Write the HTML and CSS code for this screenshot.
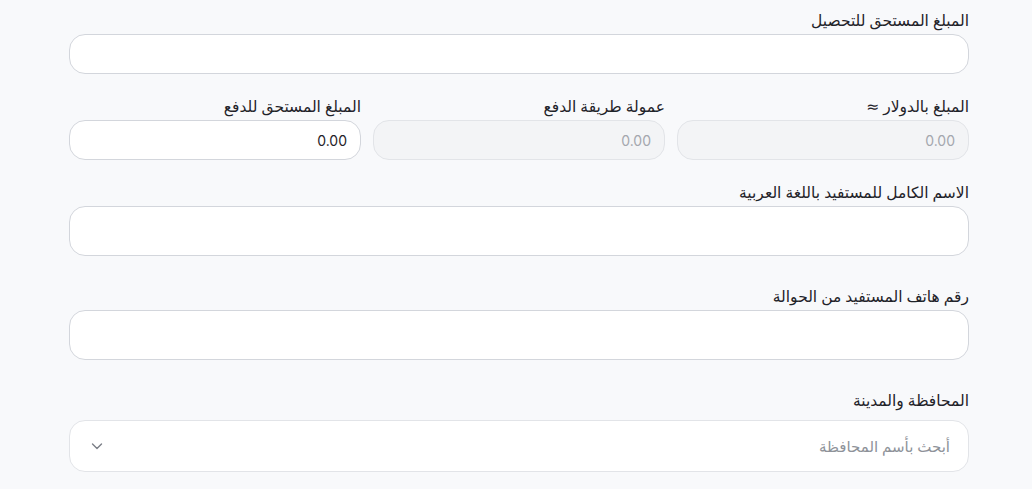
FILE: index.html
```html
<!DOCTYPE html>
<html lang="ar" dir="rtl">
<head>
<meta charset="utf-8">
<link rel="stylesheet" href="styles.css">
</head>
<body>
<div class="form">
  <div class="field f1">
    <label class="label">المبلغ المستحق للتحصيل</label>
    <div class="input h40"></div>
  </div>
  <div class="row f2">
    <div class="field">
      <label class="label">المبلغ بالدولار ≈</label>
      <div class="input h40 disabled"><span class="val muted">0.00</span></div>
    </div>
    <div class="field">
      <label class="label">عمولة طريقة الدفع</label>
      <div class="input h40 disabled"><span class="val muted">0.00</span></div>
    </div>
    <div class="field">
      <label class="label">المبلغ المستحق للدفع</label>
      <div class="input h40"><span class="val">0.00</span></div>
    </div>
  </div>
  <div class="field f3">
    <label class="label">الاسم الكامل للمستفيد باللغة العربية</label>
    <div class="input h50"></div>
  </div>
  <div class="field f4">
    <label class="label">رقم هاتف المستفيد من الحوالة</label>
    <div class="input h50"></div>
  </div>
  <div class="field f5">
    <label class="label">المحافظة والمدينة</label>
    <div class="input h52 select">
      <span class="placeholder">أبحث بأسم المحافظة</span>
      <svg class="chev" width="14" height="14" viewBox="0 0 14 14"><path d="M2.5 5 L7 9.5 L11.5 5" fill="none" stroke="#7b7f87" stroke-width="1.4" stroke-linecap="round" stroke-linejoin="round"/></svg>
    </div>
  </div>
</div>
</body>
</html>
```
FILE: styles.css
```css
html, body {
  margin: 0;
  padding: 0;
  background: #f8f9fb;
}
body {
  font-family: "Noto Sans", "DejaVu Sans", sans-serif;
  color: #1f2329;
}
.form {
  margin: 0 63px 0 69px;
  padding-top: 10px;
  display: flex;
  flex-direction: column;
}
.field {
  display: flex;
  flex-direction: column;
}
.label {
  font-size: 15.5px;
  line-height: 20px;
  margin-bottom: 4px;
}
.row {
  display: grid;
  grid-template-columns: repeat(3, 1fr);
  gap: 12px;
}
.f2 { margin-top: 22px; }
.f3 { margin-top: 22px; }
.f4 { margin-top: 30px; }
.f5 { margin-top: 30px; }
.f5 .label { margin-bottom: 10px; }
.input {
  box-sizing: border-box;
  background: #fff;
  border: 1px solid #d3d6dc;
  border-radius: 16px;
  display: flex;
  align-items: center;
  padding: 0 16px;
}
.h40 { height: 40px; }
.h50 { height: 50px; }
.h52 { height: 52px; border-color: #e2e4e8; }
.disabled {
  background: #f3f4f6;
  border-color: #e2e4e8;
}
.val {
  font-family: Inter, "Noto Sans", sans-serif;
  font-size: 14px;
  color: #1f2329;
  direction: ltr;
  margin-right: -3px;
}
.val.muted { color: #a3a7ae; }
.select {
  justify-content: space-between;
  padding: 0 18px 0 20px;
}
.placeholder {
  font-size: 15px;
  color: #8e9299;
}
.chev { display: block; }
```
